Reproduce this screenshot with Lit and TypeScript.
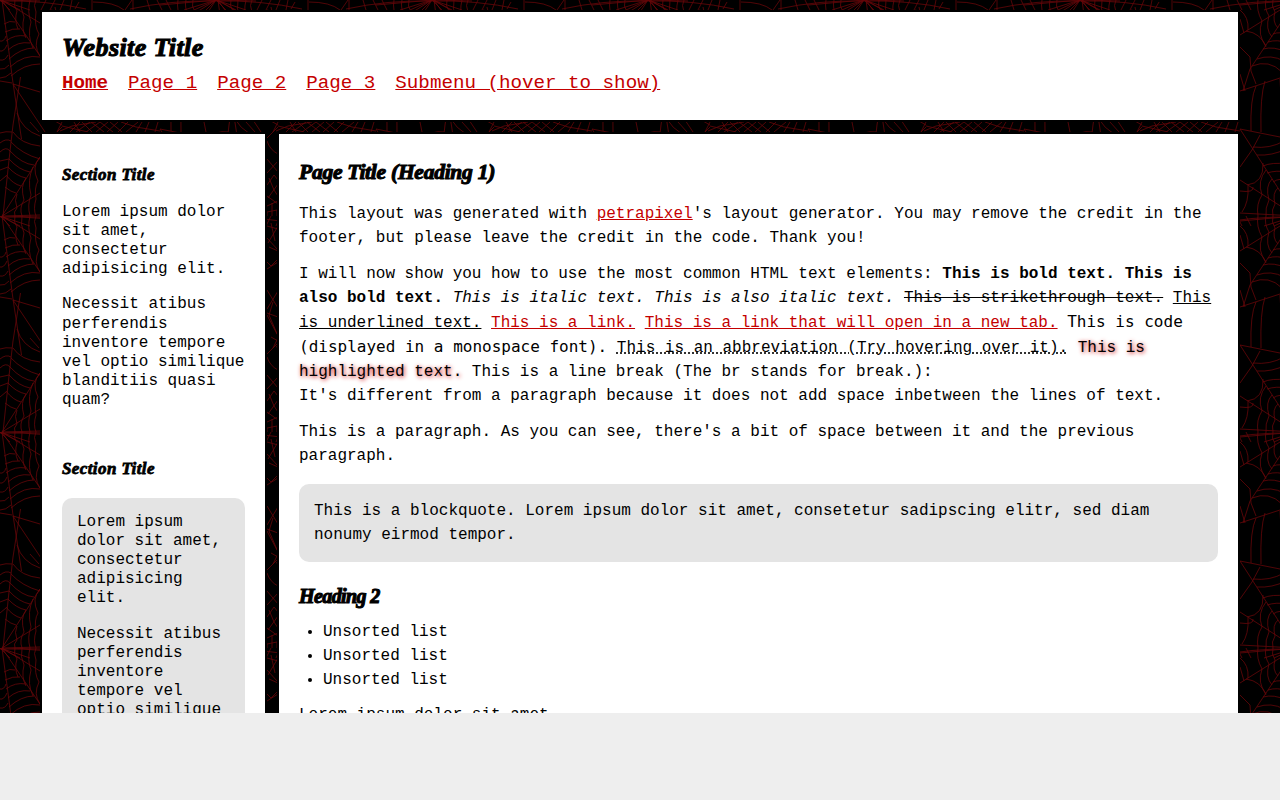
import { LitElement, html, css, svg } from "lit";
import { customElement } from "lit/decorators.js";

const strands: string[] = [
  // left column of the tile
  "M2 0L8 45L13 83L21.5 139", "M20.5 77L13 125L9 160L3 216", "M13 84L45 132", "M13 84L40 92",
  "M17 113Q22 130 40 136", "M13 132Q21 144 40 146",
  "M2 0L40 23", "M2 0L40 56", "M2 0L40 1", "M2 216L40 193", "M2 216L40 157", "M2 216L40 215",
  "M11 76Q24 64 40 64", "M10 67Q24 54 40 57", "M9 59Q21 48 34 48", "M8 50Q18 41 30 43", "M6 41Q15 34 26 36", "M5 32Q13 28 20 29", "M4 24Q10 20 15 22",
  "M11 142Q22 154 40 159", "M10 151Q22 164 34 165", "M9 159Q19 170 30 172", "M8 167Q16 176 26 178", "M6 175Q13 184 21 186", "M5 187Q11 192 16 193",
  "M40 56Q33 46 39 34Q34 26 36 12Q33 5 36 0", "M33 48Q27 36 31 22Q27 12 30 0", "M26 38Q21 29 24 17Q20 9 22 0", "M18 29Q14 20 17 11Q13 6 15 0",
  "M40 157Q31 167 38 181Q34 188 36 199Q33 209 36 216", "M33 167Q27 180 31 195Q27 205 30 216", "M26 178Q20 186 24 200Q19 208 22 216", "M17 194Q14 200 17 208Q13 212 15 216",
  "M0 81L12 83", "M0 78Q6 78 11 73", "M0 69Q5 70 9 65", "M0 60Q5 61 8 55", "M0 51Q4 52 7 45", "M0 41Q4 42 6 36", "M0 133Q6 131 12 132", "M0 143Q6 138 11 141", "M0 152Q6 146 10 151", "M0 161L9 159", "M0 170L8 167", "M0 181L6 176",
  // narrow column between the sidebar and the main box
  "M51 138L62 127", "M51 141Q54 150 62 154", "M51 159L62 172", "M51 173L62 161", "M51 185L58 175L62 180", "M53 178L58 190L62 196", "M62 184L52 198",
  "M51 196L62 204", "M51 206L62 201", "M51 212L61 210V220L51 219Z", "M56 203V226", "M51 225L62 229", "M62 226L51 240",
  "M51 10L62 13", "M62 10L52 27", "M51 22L62 34", "M55 7L59 25", "M53 31L62 35", "M51 46L55 50L62 43", "M51 53L62 46", "M51 74L62 92", "M62 75L51 93",
  "M51 97L62 101", "M57 86L53 99L62 120", "M51 99L61 118", "M55 121L62 125",
  // right column
  "M160 35L216 0", "M160 5L216 0", "M160 180L216 216", "M160 213L216 216", "M160 129L216 216", "M163 91L170 69L216 0",
  "M160 47L170 57L171 71L176 84", "M160 74L165 91", "M160 91L200 78L216 76", "M176 86Q170 99 171 131", "M185 81Q180 96 181 132", "M200 79L201 96",
  "M160 129L200 137L216 140", "M160 167L172 150L180 135",
  "M167 185Q184 183 183 163", "M166 31Q181 33 186 47",
  "M173 147Q190 149 204 141", "M177 155Q192 156 206 149", "M183 166Q192 162 206 164", "M187 173Q196 170 208 172", "M193 182Q200 177 210 181",
  "M172 66Q189 59 202 72", "M177 59Q191 54 204 61", "M183 49Q194 46 206 52", "M188 42Q197 39 208 43", "M193 34Q200 31 210 35",
  "M186 170Q177 181 182 195Q176 204 178 216", "M192 179Q185 186 189 200Q185 208 186 216", "M198 188Q192 193 195 204Q191 210 193 216",
  "M160 191Q174 193 173 187", "M162 212Q169 202 168 186",
  "M186 46Q177 35 182 21Q176 10 178 0", "M192 37Q185 29 189 16Q184 8 186 0", "M198 28Q192 22 195 12Q191 6 193 0",
  "M160 10Q169 17 168 30", "M160 19L164 33",
  // top edge
  "M0 1Q45 0 86 9", "M216 1Q171 0 130 9", "M92 0V10", "M93 2Q114 2 124 10", "M132 0L125 10", "M133 0V10",
  "M0 0L20 10", "M0 0L30 10", "M0 0L10 10", "M216 0L194 10", "M216 0L184 10", "M216 0L206 10",
  "M46 0L41 10", "M55 0L50 10", "M64 0L60 10", "M72 0L70 10", "M79 2L75 9", "M147 0L150 10", "M157 0L162 10", "M166 0L171 10",
  // middle band
  "M60 131L72 126L96 122", "M57 132L62 122", "M62 126L88 132", "M70 132L80 122", "M76 132L90 122", "M74 122L80 132",
  "M82 122L92 132", "M86 132L100 122", "M91 122L104 132", "M96 132L108 122", "M100 122L113 132", "M107 132L118 122",
  "M110 122L122 132", "M118 132L128 122", "M121 122L136 127L160 131", "M126 132L138 122", "M136 132L142 122", "M145 132L149 122", "M155 132L158 122",
  "M204 122L206 132", "M30 122L39 132",
];

@customElement("app-root")
export class AppRoot extends LitElement {
  static styles = css`
    :host { display: block; height: 800px; overflow: hidden; background: #eee; color: #000;
      font: 16px/24px "Liberation Mono", "Courier New", monospace; }
    * { box-sizing: border-box; }
    .view { height: 713px; overflow: hidden; background: #000; display: grid; }
    .web { grid-area: 1 / 1; width: 1280px; height: 713px; display: block; }
    .strand { fill: none; stroke: #640508; stroke-width: .8; }
    .page { grid-area: 1 / 1; z-index: 1; width: 1200px; margin: 10px auto 0; display: grid;
      grid-template-columns: 227px 963px; grid-template-rows: 112px auto; gap: 10px; height: 1000px; }
    .box { background: #fff; border: 2px solid #000; padding: 20px; }
    .header { grid-column: 1 / 3; }
    .gothic { font-family: "Liberation Serif", serif; font-weight: 700; font-style: italic; margin: 0; white-space: nowrap;
      -webkit-text-stroke: 1.1px #000; }
    .site { font-size: 26px; line-height: 32px; letter-spacing: .4px; }
    .nav { display: flex; gap: 20px; font-size: 19.2px; line-height: 24px; margin-top: 7px; }
    .link { color: #c40000; text-decoration: underline; }
    .active { font-weight: 700; }
    .p { margin: 0 0 12px; }
    .side .p { line-height: 19.2px; margin-bottom: 16px; }
    .section { font-size: 17px; line-height: 20px; margin: 11px 0 17.5px; letter-spacing: .4px; -webkit-text-stroke-width: .8px; }
    .second { margin-top: 48.6px; margin-bottom: 18.46px; }
    .quote { background: #e4e4e4; border-radius: 10px; padding: 15px; }
    .h1 { font-size: 21.5px; line-height: 28px; margin: 4px 0 16px; letter-spacing: -.25px; }
    .h2 { font-size: 20px; line-height: 28px; margin: 20px 0 10px; letter-spacing: -.6px; }
    .main .quote { margin: 16px 0 0; height: 78px; }
    .code { font-family: "DejaVu Sans Mono", monospace; }
    .abbr { text-decoration: underline dotted; }
    .mark { text-shadow: 1px 1px 4px #d00000; }
    .list { margin: 0 0 11px; padding-left: 24px; }
  `;
  render() {
    return html`<div class="view">
      <svg class="web" aria-hidden="true"><defs><pattern id="web" width="216" height="216" patternUnits="userSpaceOnUse">
        ${strands.map((d) => svg`<path class="strand" d=${d}></path>`)}
      </pattern></defs><rect width="1280" height="713" fill="url(#web)"></rect></svg>
      <div class="page">
        <header class="box header">
          <div class="gothic site">Website Title</div>
          <nav class="nav"><a class="link active">Home</a><a class="link">Page 1</a><a class="link">Page 2</a><a class="link">Page 3</a><a class="link">Submenu (hover to show)</a></nav>
        </header>
        <aside class="box side">
          <h2 class="gothic section">Section Title</h2>
          <p class="p">Lorem ipsum dolor sit amet, consectetur adipisicing elit.</p>
          <p class="p">Necessit atibus perferendis inventore tempore vel optio similique blanditiis quasi quam?</p>
          <h2 class="gothic section second">Section Title</h2>
          <div class="quote"><p class="p">Lorem ipsum dolor sit amet, consectetur adipisicing elit.</p><p class="p">Necessit atibus perferendis inventore tempore vel optio similique blanditiis quasi quam?</p></div>
        </aside>
        <main class="box main">
          <h1 class="gothic h1">Page Title (Heading 1)</h1>
          <p class="p">This layout was generated with <a class="link">petrapixel</a>'s layout generator. You may remove the credit in the footer, but please leave the credit in the code. Thank you!</p>
          <p class="p">I will now show you how to use the most common HTML text elements: <b>This is bold text.</b> <b>This is also bold text.</b> <i>This is italic text.</i> <i>This is also italic text.</i> <s>This is strikethrough text.</s> <u>This is underlined text.</u> <a class="link">This is a link.</a> <a class="link">This is a link that will open in a new tab.</a> <span class="code">This is code (displayed in a monospace font).</span> <span class="abbr">This is an abbreviation (Try hovering over it).</span> <span class="mark">This is highlighted text.</span> This is a line break (The br stands for break.):<br>It's different from a paragraph because it does not add space inbetween the lines of text.</p>
          <p class="p">This is a paragraph. As you can see, there's a bit of space between it and the previous paragraph.</p>
          <div class="quote">This is a blockquote. Lorem ipsum dolor sit amet, consetetur sadipscing elitr, sed diam nonumy eirmod tempor.</div>
          <h2 class="gothic h2">Heading 2</h2>
          <ul class="list"><li>Unsorted list</li><li>Unsorted list</li><li>Unsorted list</li></ul>
          <p class="p">Lorem ipsum dolor sit amet.</p>
        </main>
      </div>
    </div>`;
  }
}
